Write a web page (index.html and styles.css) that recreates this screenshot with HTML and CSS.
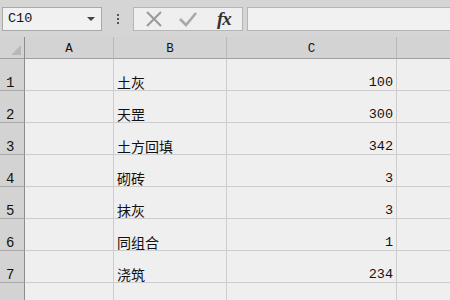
FILE: index.html
```html
<!DOCTYPE html>
<html>
<head>
<meta charset="utf-8">
<link rel="stylesheet" href="styles.css">
</head>
<body>
<div class="toolbar">
  <div class="namebox">
    <span class="name">C10</span>
    <span class="caret"></span>
  </div>
  <div class="dots"><i></i><i></i><i></i></div>
  <div class="fbtns">
    <svg class="ico" width="20" height="20" viewBox="0 0 20 20"><path d="M3 3 L17 17 M17 3 L3 17" stroke="#9a9a9a" stroke-width="2" fill="none"/></svg>
    <svg class="ico" width="22" height="20" viewBox="0 0 22 20"><path d="M3 10 L9 16 L19 4" stroke="#a8a8a8" stroke-width="2.6" fill="none"/></svg>
    <span class="fx">fx</span>
  </div>
  <div class="finput"></div>
</div>
<div class="sheet">
  <div class="corner"><span class="tri"></span></div>
  <div class="colh">A</div>
  <div class="colh">B</div>
  <div class="colh">C</div>
  <div class="colh last"></div>

  <div class="rowh">1</div><div class="cell"></div><div class="cell txt">土灰</div><div class="cell num">100</div><div class="cell last"></div>
  <div class="rowh">2</div><div class="cell"></div><div class="cell txt">天罡</div><div class="cell num">300</div><div class="cell last"></div>
  <div class="rowh">3</div><div class="cell"></div><div class="cell txt">土方回填</div><div class="cell num">342</div><div class="cell last"></div>
  <div class="rowh">4</div><div class="cell"></div><div class="cell txt">砌砖</div><div class="cell num">3</div><div class="cell last"></div>
  <div class="rowh">5</div><div class="cell"></div><div class="cell txt">抹灰</div><div class="cell num">3</div><div class="cell last"></div>
  <div class="rowh">6</div><div class="cell"></div><div class="cell txt">同组合</div><div class="cell num">1</div><div class="cell last"></div>
  <div class="rowh">7</div><div class="cell"></div><div class="cell txt">浇筑</div><div class="cell num">234</div><div class="cell last"></div>
  <div class="rowh">8</div><div class="cell"></div><div class="cell txt">灰化土</div><div class="cell num"></div><div class="cell last"></div>
</div>
</body>
</html>
```
FILE: styles.css
```css
html, body {
  margin: 0;
  padding: 0;
  width: 450px;
  height: 300px;
  overflow: hidden;
  background: #efefef;
  font-family: "Noto Sans CJK SC", "Liberation Sans", sans-serif;
}
.toolbar {
  height: 37px;
  background: #d5d5d5;
  display: flex;
  align-items: center;
  padding: 0 0 0 2px;
  box-sizing: border-box;
}
.namebox {
  width: 100px;
  height: 24px;
  box-sizing: border-box;
  border: 1px solid #a9a9a9;
  background: #f1f1f1;
  display: flex;
  align-items: center;
  justify-content: space-between;
  padding: 0 6px 0 5px;
}
.name {
  font-family: "Liberation Mono", monospace;
  font-size: 13.5px;
  color: #111;
}
.caret {
  width: 0;
  height: 0;
  border-left: 4px solid transparent;
  border-right: 4px solid transparent;
  border-top: 4px solid #444;
}
.dots {
  width: 31px;
  display: flex;
  flex-direction: column;
  align-items: center;
  gap: 2px;
}
.dots i {
  display: block;
  width: 2px;
  height: 2px;
  background: #555;
}
.fbtns {
  width: 110px;
  height: 24px;
  box-sizing: border-box;
  border: 1px solid #b5b5b5;
  background: #efefef;
  display: flex;
  align-items: center;
  padding-left: 10px;
  gap: 13px;
}
.fx {
  font-family: "Liberation Serif", serif;
  font-style: italic;
  font-weight: bold;
  font-size: 19px;
  color: #333;
  margin-left: 5px;
  letter-spacing: -1px;
}
.finput {
  flex: 1;
  height: 24px;
  margin-left: 4px;
  box-sizing: border-box;
  border: 1px solid #b5b5b5;
  border-right: none;
  background: #f1f1f1;
}
.sheet {
  display: grid;
  grid-template-columns: 25px 89px 113px 170px 1fr;
  grid-template-rows: 22px repeat(8, 32px);
}
.corner, .colh {
  background: #d3d3d3;
  border-bottom: 1px solid #9f9f9f;
  border-right: 1px solid #b9b9b9;
  box-sizing: border-box;
}
.corner {
  position: relative;
  border-right: 1px solid #8c8c8c;
}
.tri {
  position: absolute;
  right: 3px;
  bottom: 3px;
  width: 0;
  height: 0;
  border-left: 10px solid transparent;
  border-bottom: 10px solid #b8b8b8;
}
.colh {
  font-family: "Liberation Mono", monospace;
  font-size: 12.5px;
  color: #111;
  display: flex;
  align-items: center;
  justify-content: center;
  padding-top: 2px;
}
.colh.last, .cell.last {
  border-right: none;
}
.rowh {
  background: #d3d3d3;
  border-right: 1px solid #8c8c8c;
  border-bottom: 1px solid #a9a9a9;
  box-sizing: border-box;
  font-family: "Liberation Mono", monospace;
  font-size: 14px;
  line-height: 14px;
  color: #111;
  display: flex;
  align-items: flex-end;
  padding: 0 0 0 6px;
}
.cell {
  border-right: 1px solid #cdcdcd;
  border-bottom: 1px solid #cdcdcd;
  box-sizing: border-box;
  display: flex;
  align-items: flex-end;
  color: #111;
}
.txt {
  font-size: 14px;
  line-height: 16px;
  padding: 0 0 0 3px;
}
.num {
  justify-content: flex-end;
  font-family: "Liberation Mono", monospace;
  font-size: 13.5px;
  line-height: 14px;
  padding: 0 3px 0 0;
}
```
